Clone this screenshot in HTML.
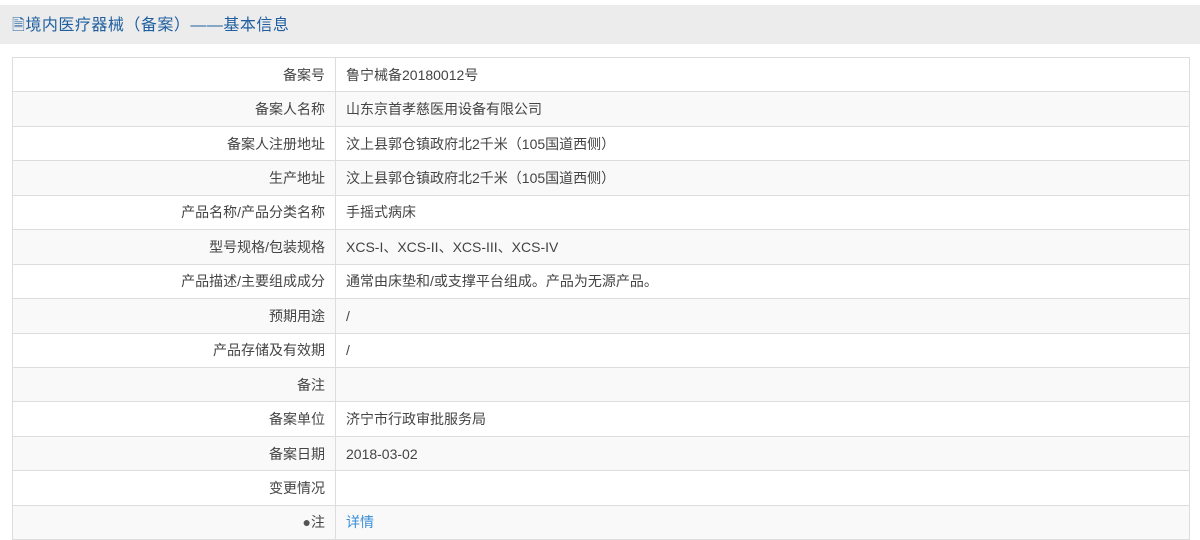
<!DOCTYPE html>
<html><head><meta charset="utf-8"><style>
body{margin:0;width:1200px;height:537px;overflow:hidden;background:#fff;font-family:"Liberation Sans","Noto Sans CJK SC",sans-serif;}
.hd{position:absolute;left:0;top:5px;width:1200px;height:39px;background:#ececec;color:#1f5fa0;font-size:16px;line-height:39px;letter-spacing:0.5px;}
.hd span{position:absolute;left:12px;top:1px;}
table{position:absolute;left:12px;top:57px;width:1178px;border-collapse:collapse;font-size:14px;color:#444;}
td{border:1px solid #ddd;height:33.45px;padding:0 10px;}
td.l{width:302px;text-align:right;}
tr:nth-child(even) td{background:#f9f9f9;}
a{color:#3a8ed8;text-decoration:none;}
</style></head><body>
<div class="hd"><span>&#128462;境内医疗器械（备案）——基本信息</span></div>
<table>
<tr><td class="l">备案号</td><td>鲁宁械备20180012号</td></tr>
<tr><td class="l">备案人名称</td><td>山东京首孝慈医用设备有限公司</td></tr>
<tr><td class="l">备案人注册地址</td><td>汶上县郭仓镇政府北2千米（105国道西侧）</td></tr>
<tr><td class="l">生产地址</td><td>汶上县郭仓镇政府北2千米（105国道西侧）</td></tr>
<tr><td class="l">产品名称/产品分类名称</td><td>手摇式病床</td></tr>
<tr><td class="l">型号规格/包装规格</td><td>XCS-I、XCS-II、XCS-III、XCS-IV</td></tr>
<tr><td class="l">产品描述/主要组成成分</td><td>通常由床垫和/或支撑平台组成。产品为无源产品。</td></tr>
<tr><td class="l">预期用途</td><td>/</td></tr>
<tr><td class="l">产品存储及有效期</td><td>/</td></tr>
<tr><td class="l">备注</td><td></td></tr>
<tr><td class="l">备案单位</td><td>济宁市行政审批服务局</td></tr>
<tr><td class="l">备案日期</td><td>2018-03-02</td></tr>
<tr><td class="l">变更情况</td><td></td></tr>
<tr><td class="l"><span style="color:#555">&#9679;</span>注</td><td><a>详情</a></td></tr>
</table>
</body></html>
